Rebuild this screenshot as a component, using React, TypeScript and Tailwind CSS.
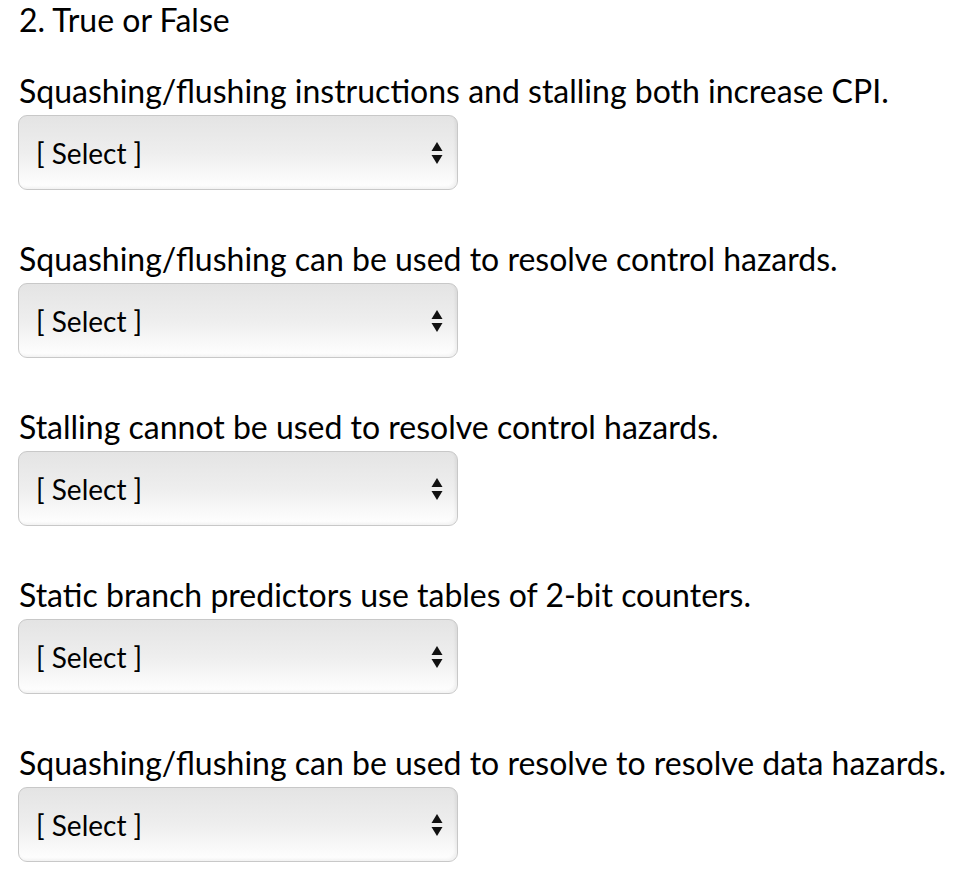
export default function App() {
  const questions = [
    'Squashing/flushing instructions and stalling both increase CPI.',
    'Squashing/flushing can be used to resolve control hazards.',
    'Stalling cannot be used to resolve control hazards.',
    'Static branch predictors use tables of 2-bit counters.',
    'Squashing/flushing can be used to resolve to resolve data hazards.',
  ]

  return (
    <div className="min-h-screen bg-white text-black font-['Lato',sans-serif] pl-[19px]">
      <div className="text-[32px] leading-[40px]">2. True or False</div>
      <div className="flex flex-col">
        {questions.map((q, i) => (
          <div key={i} className={`flex flex-col ${i === 0 ? 'mt-[31px]' : 'mt-[49px]'}`}>
            <div className="text-[32px] leading-[40px]">{q}</div>
            <div className="mt-[4px] -ml-px w-[440px] h-[75px] rounded-[9px] border border-[#c8c8c8] bg-gradient-to-b from-[#e4e4e4] via-[#eeeeee] to-white shadow-[inset_-2px_-2px_3px_rgba(0,0,0,0.05)] flex items-center justify-between pl-[17px] pr-[14px]">
              <span className="text-[28px]">[ Select ]</span>
              <svg width="12" height="24" viewBox="0 0 12 24">
                <path d="M6 1 L11.5 10 H0.5 Z" fill="#111" />
                <path d="M6 23 L11.5 14 H0.5 Z" fill="#111" />
              </svg>
            </div>
          </div>
        ))}
      </div>
    </div>
  )
}
